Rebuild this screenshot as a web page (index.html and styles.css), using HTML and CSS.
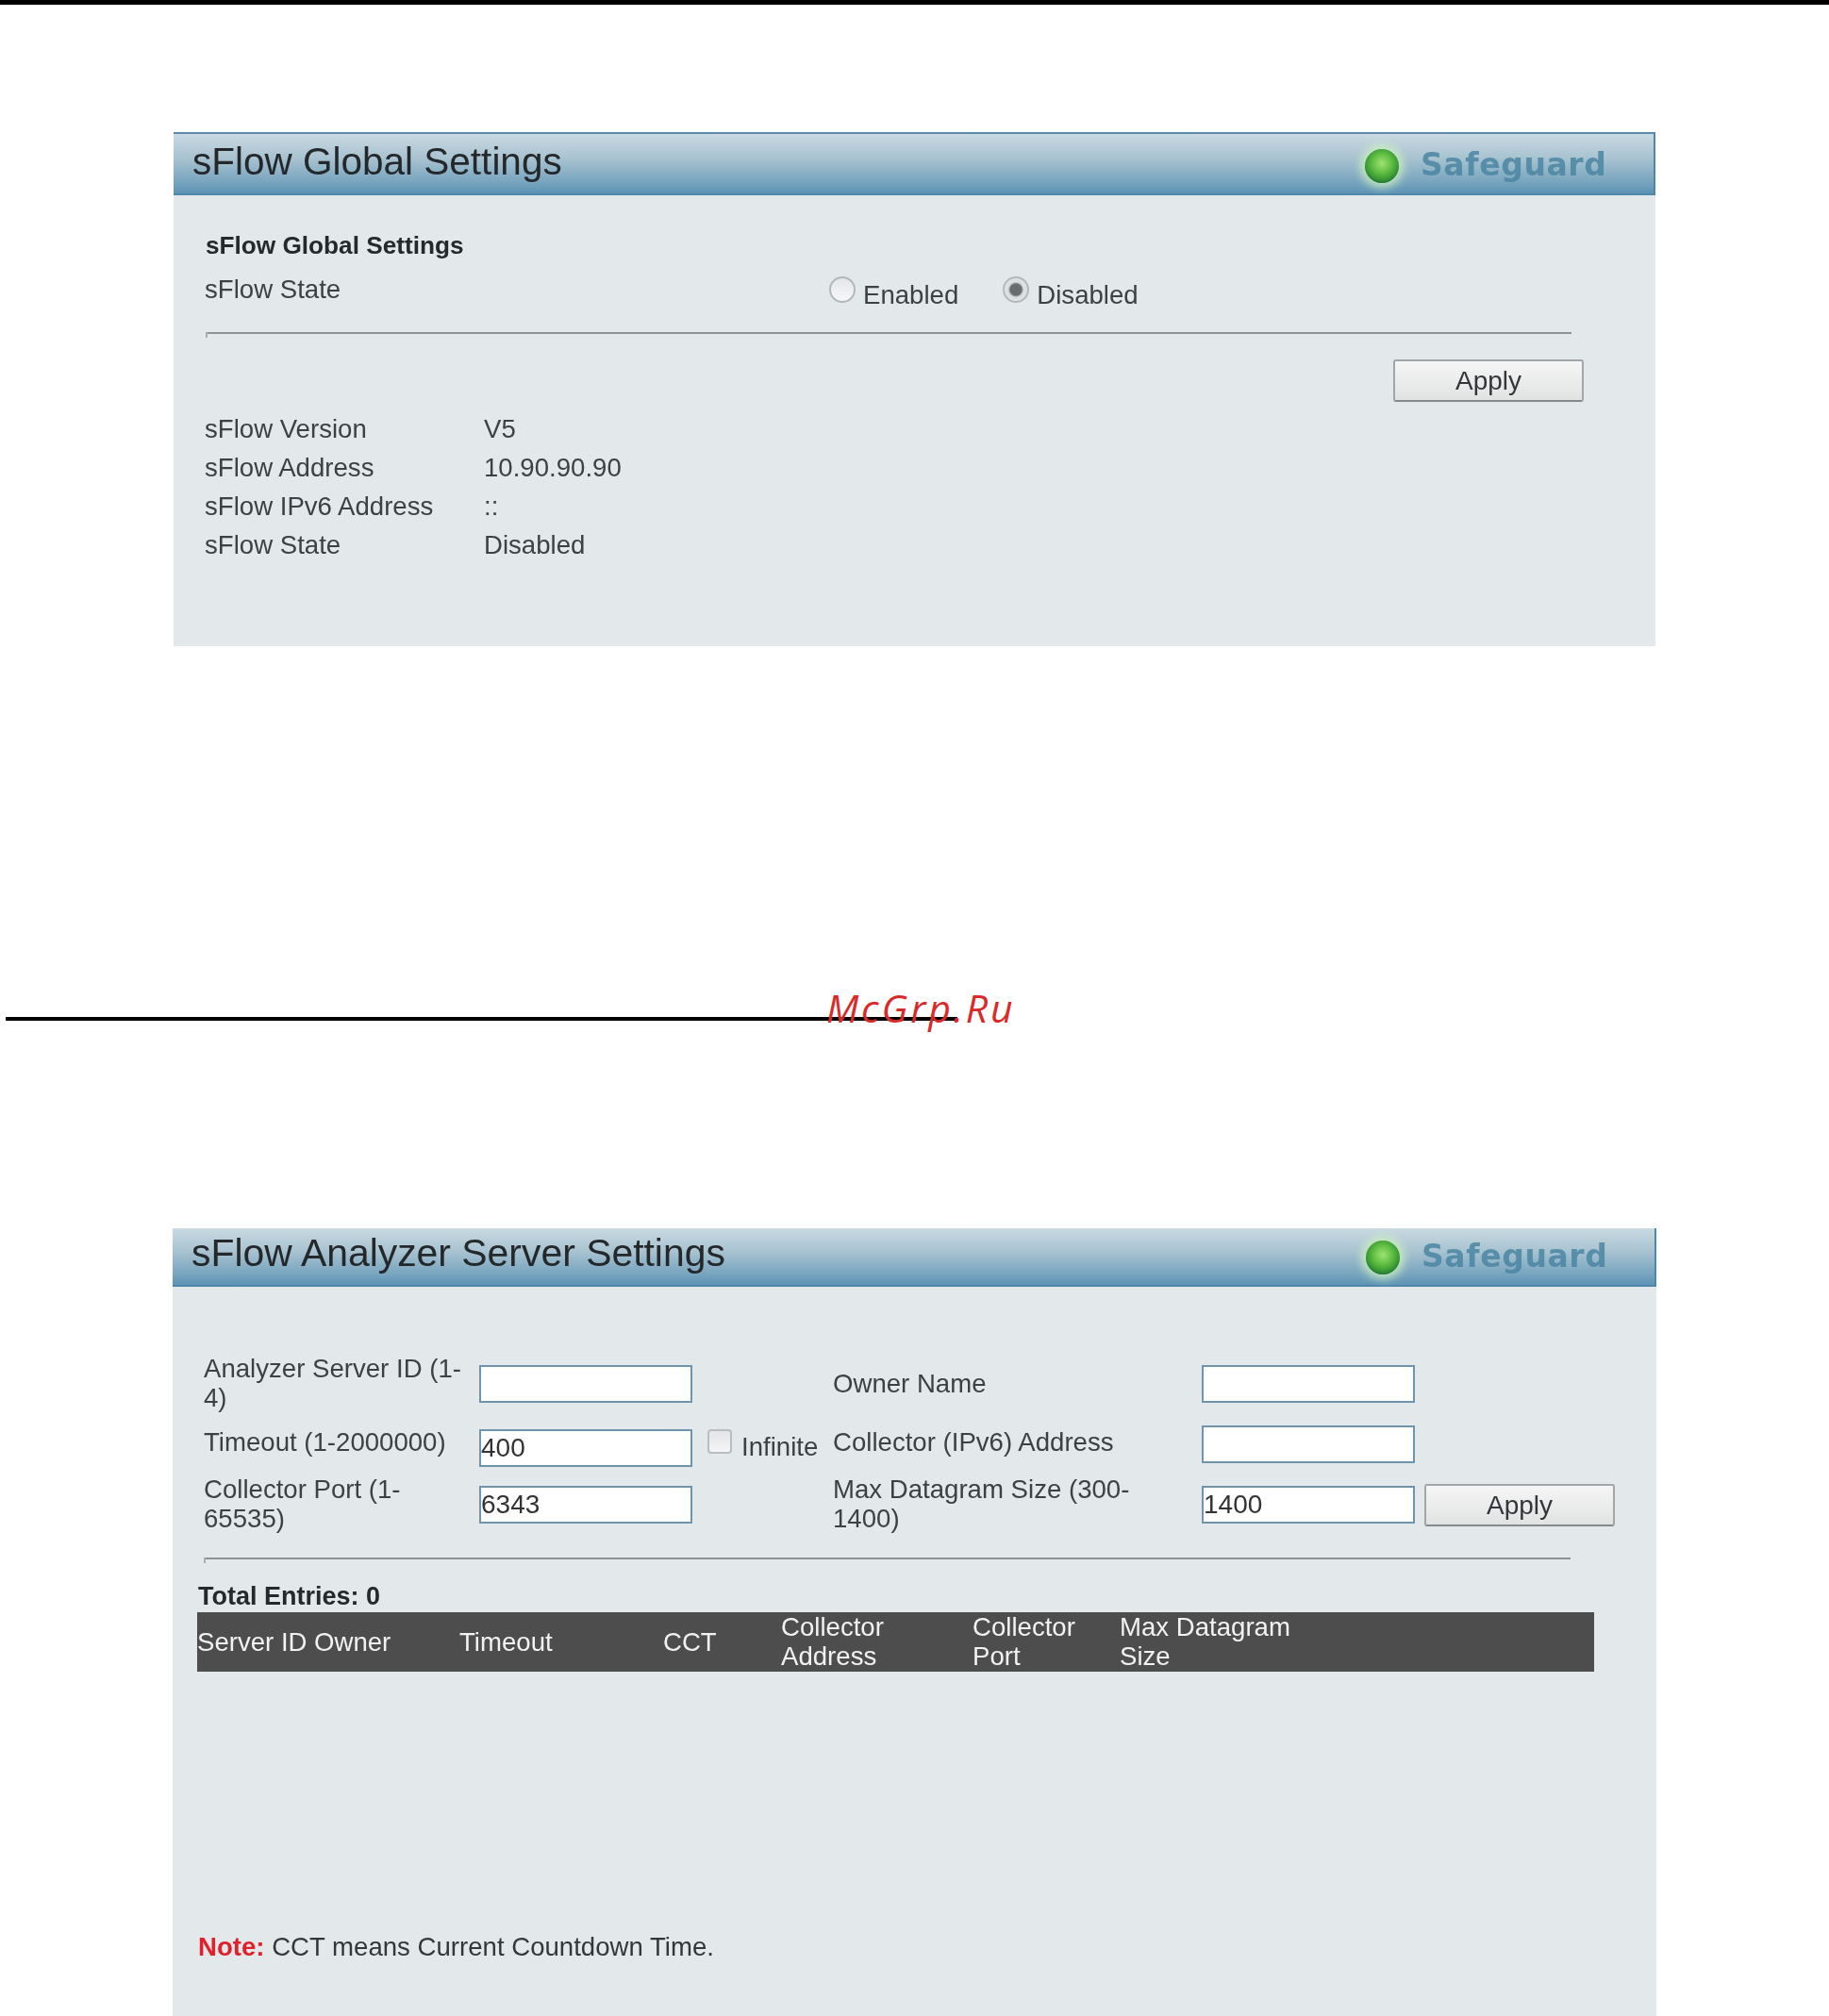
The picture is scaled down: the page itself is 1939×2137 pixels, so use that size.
FILE: index.html
```html
<!DOCTYPE html>
<html lang="en">
<head>
<meta charset="utf-8">
<title>sFlow Settings</title>
<link rel="stylesheet" href="styles.css">
</head>
<body>
<div class="top-bar"></div>

<section class="panel panel-global">
  <header class="head">
    <h1 class="title">sFlow Global Settings</h1>
    <div class="safeguard"><span class="led"></span><span class="sg-text">Safeguard</span></div>
  </header>
  <div class="global-body">
    <div class="subhead">sFlow Global Settings</div>
    <div class="state-row">
      <span class="state-label">sFlow State</span>
      <label class="radio-wrap"><input class="radio" type="radio" name="state"><span class="radio-text">Enabled</span></label>
      <label class="radio-wrap"><input class="radio" type="radio" name="state" checked><span class="radio-text">Disabled</span></label>
    </div>
    <div class="rule rule-global"></div>
    <div class="apply-line"><button class="btn">Apply</button></div>
    <dl class="info">
      <dt>sFlow Version</dt><dd>V5</dd>
      <dt>sFlow Address</dt><dd>10.90.90.90</dd>
      <dt>sFlow IPv6 Address</dt><dd>::</dd>
      <dt>sFlow State</dt><dd>Disabled</dd>
    </dl>
  </div>
</section>

<div class="page-line">
  <span class="mark">McGrp.Ru</span>
</div>

<section class="panel panel-server">
  <header class="head head-server">
    <h1 class="title title-server">sFlow Analyzer Server Settings</h1>
    <div class="safeguard"><span class="led"></span><span class="sg-text">Safeguard</span></div>
  </header>
  <div class="server-body">
    <div class="form">
      <label class="lab">Analyzer Server ID (1-4)</label>
      <input class="field" type="text">
      <span></span>
      <label class="lab lab-right">Owner Name</label>
      <input class="field" type="text">
      <span></span>

      <label class="lab lab-up">Timeout (1-2000000)</label>
      <input class="field field-down" type="text" value="400">
      <label class="infinite"><input class="check" type="checkbox"><span class="inf-text">Infinite</span></label>
      <label class="lab lab-up lab-right">Collector (IPv6) Address</label>
      <input class="field" type="text">
      <span></span>

      <label class="lab">Collector Port (1-65535)</label>
      <input class="field" type="text" value="6343">
      <span></span>
      <label class="lab lab-right">Max Datagram Size (300-1400)</label>
      <input class="field" type="text" value="1400">
      <button class="btn">Apply</button>
    </div>
    <div class="rule rule-server"></div>
    <div class="total">Total Entries: 0</div>
    <div class="thead">
      <span>Server ID</span>
      <span>Owner</span>
      <span>Timeout</span>
      <span>CCT</span>
      <span>Collector<br>Address</span>
      <span>Collector<br>Port</span>
      <span>Max Datagram<br>Size</span>
    </div>
    <p class="note"><b class="note-key">Note:</b> CCT means Current Countdown Time.</p>
  </div>
</section>
</body>
</html>
```
FILE: styles.css
```css
* { box-sizing: border-box; }
html, body { margin: 0; padding: 0; background: #fff; }
body {
  width: 1939px;
  height: 2137px;
  overflow: hidden;
  font-family: "Liberation Sans", Arial, sans-serif;
  font-size: 27.6px;
  line-height: 31px;
  color: #3d4144;
}
.top-bar { height: 5px; background: #000; }

.panel { background: #e3e8eb; filter: blur(0.6px); }
.panel-global { margin: 135px 0 0 184px; width: 1571px; height: 545px; }
.panel-server { margin: 220px 0 0 183px; width: 1573px; height: 835px; }

.head {
  height: 67px;
  padding: 0 0 6px 20px;
  display: flex;
  align-items: center;
  justify-content: space-between;
  background: linear-gradient(#c9dae2 0%, #a9c3d1 40%, #79a5bf 80%, #5d93b5 100%);
  border-top: 2px solid #5d8cab;
  border-bottom: 2px solid #4f87ab;
  border-right: 2px solid #4f87ab;
}
.head-server { height: 62px; padding-bottom: 8px; border-top: 0; }
.title { margin: 0; font-size: 40.5px; line-height: 44px; font-weight: 400; color: #24282b; }
.title-server { font-size: 40.9px; }

.safeguard { display: flex; align-items: center; gap: 23px; margin: 10px 0 0; padding-right: 50px; }
.led {
  width: 36px; height: 36px; border-radius: 50%;
  background: radial-gradient(circle at 50% 42%, #9fe276 0%, #62c044 36%, #3a9a33 62%, #12602a 84%, #115a28 100%);
  box-shadow: 0 0 10px 5px rgba(205, 240, 190, .85);
}
.sg-text {
  display: block; width: 197px;
  font-family: "DejaVu Sans", sans-serif;
  font-size: 33px; line-height: 38px; font-weight: 700;
  letter-spacing: 0.6px;
  color: #4b86a3; opacity: .85;
  white-space: nowrap;
  margin-top: -2px;
}

.global-body { padding: 38px 0 0 33px; }
.subhead { margin-left: 1px; font-size: 26.2px; font-weight: 700; color: #26292b; }
.state-row { display: flex; align-items: flex-start; margin-top: 15px; height: 46px; }
.state-label { width: 662px; }
.radio-wrap { display: flex; align-items: flex-start; margin-right: 47px; }
.radio {
  appearance: none; margin: 2px 8px 0 0; width: 28px; height: 28px; border-radius: 50%;
  border: 2px solid #b3b8bb;
  background: linear-gradient(#e4e6e8, #f7f8f8);
}
.radio:checked { background: radial-gradient(circle, #6a6d70 0 6px, #d8dbdd 8px, #eff1f2 100%); }
.radio-text { margin-top: 6px; }
.rule { position: relative; height: 2px; background: #8d9295; }
.rule::before { content: ""; position: absolute; left: 0; top: 0; width: 2px; height: 6px; background: #a9aeb1; }
.rule-global { margin: 15px 0 0 1px; width: 1448px; }
.apply-line { display: flex; justify-content: flex-end; width: 1462px; margin-top: 27px; }
.btn {
  width: 202px; height: 45px; padding: 0;
  font: 28px/31px "Liberation Sans", Arial, sans-serif; color: #33373a;
  background: linear-gradient(#f6f6f6, #e1e2e2);
  border: 2px solid #a2a6a8; border-bottom-color: #85898c; border-radius: 3px;
}
.info { margin: 8px 0 0; display: grid; grid-template-columns: 296px 1fr; grid-auto-rows: 41px; align-items: center; }
.info dt, .info dd { margin: 0; }

.page-line { position: relative; margin: 393px 0 0 6px; width: 1009px; height: 4px; background: #000; }
.mark {
  position: absolute; left: 870px; top: -33px;
  font-family: "Open Sans", sans-serif; font-style: italic;
  font-size: 41px; line-height: 46px; letter-spacing: 2.8px;
  color: #d92a2a; white-space: nowrap;
}

.server-body { padding: 72px 0 0 33px; }
.form {
  display: grid;
  grid-template-columns: 292px 226px 149px 391px 226px 202px;
  grid-template-rows: 62px 65px 64px;
  align-items: center;
}
.form .btn { margin-left: 10px; }
.lab { display: block; padding-right: 10px; margin-bottom: 2px; }
.lab-up { margin-bottom: 4px; }
.lab-right { padding-right: 50px; }
.field {
  width: 226px; height: 40px; margin: 0; padding: 0;
  font: 28px/31px "Liberation Sans", Arial, sans-serif; color: #333;
  background: #fff;
  border: 2px solid #6f94ad;
}
.field-down { margin-top: 8px; }
.infinite { display: flex; align-items: flex-start; padding-left: 16px; gap: 10px; margin-top: 2px; white-space: nowrap; }
.check {
  appearance: none; margin: 0; width: 26px; height: 26px; border-radius: 4px;
  border: 2px solid #b9bdbf; background: linear-gradient(#e3e5e7, #f4f5f5);
}
.inf-text { margin-top: 3px; }
.rule-server { margin-top: 24px; width: 1449px; }
.total { margin: 24px 0 0 -6px; font-size: 27px; font-weight: 700; color: #26292b; height: 32px; }
.thead {
  margin-left: -7px; width: 1481px; height: 63px; padding-bottom: 2px;
  display: grid;
  grid-template-columns: 124px 154px 216px 125px 203px 156px 1fr;
  align-items: center;
  background: #4d4d4d; color: #f2f2f2;
}
.note { margin: 276px 0 0 -6px; color: #33373a; }
.note-key { color: #e0202a; }
```
